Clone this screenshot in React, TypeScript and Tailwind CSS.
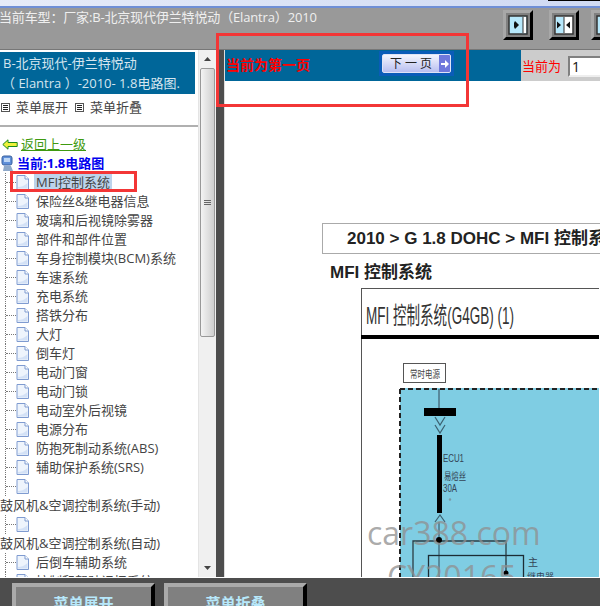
import React from 'react';

const sans = "font-['Open_Sans','Noto_Sans_CJK_SC',sans-serif]";

const treeItems = [
  { label: '保险丝&继电器信息' },
  { label: '玻璃和后视镜除雾器' },
  { label: '部件和部件位置' },
  { label: '车身控制模块(BCM)系统' },
  { label: '车速系统' },
  { label: '充电系统' },
  { label: '搭铁分布' },
  { label: '大灯' },
  { label: '倒车灯' },
  { label: '电动门窗' },
  { label: '电动门锁' },
  { label: '电动室外后视镜' },
  { label: '电源分布' },
  { label: '防抱死制动系统(ABS)' },
  { label: '辅助保护系统(SRS)' },
  { label: '' },
  { label: '鼓风机&空调控制系统(手动)', wrapped: true },
  { label: '' },
  { label: '鼓风机&空调控制系统(自动)', wrapped: true },
  { label: '后倒车辅助系统' },
  { label: '控制和驾驶记忆系统' },
];

const FileIcon = () => (
  <svg width="13" height="15" viewBox="0 0 13 15" className="shrink-0">
    <path d="M1 .5h8l3.500 3.500v10.500H1z" fill="#eef4fc" stroke="#7f9bd0" />
    <path d="M2 13.500h9.500V8C8 11 5 12 2 12z" fill="#d3e1f6" />
    <path d="M9 .5V4h3.500" fill="#fff" stroke="#7f9bd0" />
  </svg>
);

const BoxIcon = () => (
  <svg width="9" height="9" viewBox="0 0 9 9" className="shrink-0">
    <rect x=".5" y=".5" width="8" height="8" fill="#fff" stroke="#555" />
    <path d="M2 2.500h5M2 4.500h5M2 6.500h5" stroke="#222" />
  </svg>
);

const TreeRow = ({ label, wrapped }: { label: string; wrapped?: boolean }) => {
  if (wrapped) {
    return <div className="h-[19px] leading-[19px] whitespace-nowrap">{label}</div>;
  }
  return (
    <div className="h-[19px] flex items-center pl-[5px]">
      <div className="w-[11px] h-[19px] shrink-0 border-l border-dotted border-[#777]">
        <div className="h-[10px] border-b border-dotted border-[#777]" />
      </div>
      <FileIcon />
      <span className="ml-[7px] leading-[19px] whitespace-nowrap">{label}</span>
    </div>
  );
};

const ToolButton = ({ split, className }: { split?: boolean; className?: string }) => (
  <div className={`w-[30px] h-[30px] shrink-0 bg-[#808080] border-[3px] p-[2px] border-t-[#a8a8a8] border-l-[#a8a8a8] border-b-black border-r-black ${className ?? ''}`}>
    <svg width="20" height="20" viewBox="0 0 20 20" className="block">
      <rect x="1" y="1" width="18" height="18" fill={split ? '#fff' : '#b7e8fb'} stroke="#333" strokeWidth="1.500" />
      {split ? (
        <>
          <rect x="2" y="2" width="8" height="16" fill="#b7e8fb" />
          <path d="M10 2v16" stroke="#333" />
          <path d="M3 6.500l4 3.500-4 3.500zM16 6.500l-4 3.500 4 3.500z" fill="#111" />
        </>
      ) : (
        <>
          <rect x="15" y="2" width="3" height="16" fill="#fff" />
          <path d="M15 2v16" stroke="#333" />
          <path d="M7 6l4 4-4 4-1-2V8z" fill="#111" />
        </>
      )}
    </svg>
  </div>
);

const WiringDiagram = () => (
  <svg width="238" height="290" viewBox="362 288 238 290" className="block">
    <rect x="362.500" y="288.500" width="260" height="300" fill="#fff" stroke="#555" />
    <text x="367" y="324" fontSize="24" fill="#333" textLength="148" lengthAdjust="spacingAndGlyphs" fontFamily="'Liberation Sans','Noto Sans CJK SC',sans-serif">MFI 控制系统(G4GB) (1)</text>
    <rect x="362" y="335" width="238" height="4" fill="#000" />
    <rect x="404.500" y="363.500" width="42" height="19" fill="#fff" stroke="#555" />
    <text x="411" y="378" fontSize="10" fill="#444" textLength="30" lengthAdjust="spacingAndGlyphs" fontFamily="'Noto Sans CJK SC',sans-serif">常时电源</text>
    <rect x="401" y="388" width="199" height="190" fill="#7fcde3" />
    <path d="M401 389H600M401 389V578" fill="none" stroke="#222" strokeWidth="2" strokeDasharray="5 3" />
    <path d="M440 389v20" stroke="#345" strokeWidth="1" />
    <rect x="425" y="408" width="32" height="8" fill="#000" />
    <path d="M436 417l5 8 5-8M436 425l5 8 5-8" fill="none" stroke="#3c6070" strokeWidth="1.200" />
    <rect x="438" y="435" width="5" height="78" fill="#000" />
    <g fontFamily="'Liberation Sans','Noto Sans CJK SC',sans-serif" fill="#345">
      <text x="444" y="462" fontSize="11" textLength="21" lengthAdjust="spacingAndGlyphs">ECU1</text>
      <text x="445" y="480" fontSize="10" textLength="22" lengthAdjust="spacingAndGlyphs">易熔丝</text>
      <text x="444" y="492" fontSize="10" textLength="14" lengthAdjust="spacingAndGlyphs">30A</text>
      <text x="529" y="566" fontSize="10">主</text>
      <text x="528" y="580" fontSize="9">继电器</text>
    </g>
    <circle cx="451" cy="499.500" r="1.200" fill="#7a9aa8" />
    <path d="M436 522l5-7 5 7M440 522v56" fill="none" stroke="#3c6070" strokeWidth="1.200" />
    <path d="M414 578V541H507V572" fill="none" stroke="#2c3c44" strokeWidth="1.300" />
    <circle cx="440" cy="540" r="3" fill="#000" />
    <rect x="429.500" y="555.500" width="95" height="30" fill="none" stroke="#1c2c34" strokeWidth="1.300" />
    <circle cx="507" cy="573" r="2.500" fill="#000" />
  </svg>
);

export default function App() {
  return (
    <div className={`relative w-[600px] h-[606px] overflow-hidden flex flex-col bg-[#4d4d4d] ${sans} text-[13px]`}>
      {/* window title strip */}
      <div className="h-[8px] shrink-0 bg-gradient-to-r from-[#e6ebf8] to-[#cfdaf3] border-b-2 border-[#6f8fd6] flex justify-end">
        <div className="w-[52px] h-px bg-black" />
      </div>

      {/* top toolbar */}
      <div className="h-[42px] shrink-0 bg-[#999999] border-b border-[#777] flex items-start pt-[2px] relative">
        <div className="flex-1 -ml-px leading-[15px] tracking-[-0.15px] text-[#efefef] whitespace-nowrap overflow-hidden">
          当前车型：厂家:B-北京现代伊兰特悦动（Elantra）2010
        </div>
        <ToolButton className="mr-[16px]" />
        <ToolButton split className="mr-[12px]" />
        <ToolButton className="-mr-[21px]" />
      </div>

      {/* main area */}
      <div className="h-[528px] shrink-0 flex border-b border-white">
        {/* left menu */}
        <div className="w-[216px] shrink-0 bg-white flex">
          <div className="w-[198px] shrink-0 overflow-hidden text-[#444]">
            <div className="mt-[2px] w-[195px] h-[42px] bg-[#006699] text-[#d5e5ef] pl-[3px] leading-[20px] whitespace-nowrap pt-[1px]">
              <div>B-北京现代-伊兰特悦动</div>
              <div className="-ml-[1px]">（ Elantra ）-2010- 1.8电路图.</div>
            </div>
            <div className="h-[33px] flex items-center pl-[1px] border-b-2 border-[#b0b0b0] pb-[4px]">
              <BoxIcon />
              <span className="ml-[6px] mr-[7px]">菜单展开</span>
              <BoxIcon />
              <span className="ml-[6px]">菜单折叠</span>
            </div>
            <div className="pt-[8px]">
              <div className="h-[19px] flex items-center pl-[2px]">
                <svg width="16" height="11" viewBox="0 0 16 11">
                  <path d="M.8 5.500L6 .8v2.700h9.200v4H6v2.700z" fill="#eef23a" stroke="#1d8a1d" />
                </svg>
                <a className="ml-[3px] text-[#3f9a10] underline leading-[19px]">返回上一级</a>
              </div>
              <div className="h-[19px] flex items-center pl-px">
                <svg width="13" height="17" viewBox="0 0 13 17">
                  <rect x="1" y="1" width="10" height="9" rx="2" fill="#5f8fd8" stroke="#39619f" />
                  <rect x="3" y="3" width="6" height="4" fill="#bcd6f5" />
                  <path d="M3 11h7l2 5H2z" fill="#8fa9c9" />
                </svg>
                <span className="ml-[3px] font-bold text-[#0000ee] leading-[19px]">当前:1.8电路图</span>
              </div>
              <div className="h-[19px] flex items-center pl-[5px]">
                <div className="w-[11px] h-[19px] shrink-0 border-l border-dotted border-[#777]">
                  <div className="h-[10px] border-b border-dotted border-[#777]" />
                </div>
                <FileIcon />
                <span className="ml-[5px] px-[2px] bg-[#bcd4ec] leading-[17px]">MFI控制系统</span>
              </div>
              {treeItems.map((item, i) => (
                <TreeRow key={i} label={item.label} wrapped={item.wrapped} />
              ))}
            </div>
          </div>

          {/* scrollbar */}
          <div className="w-[18px] shrink-0 bg-[#f0f0f0] flex flex-col items-center border-l border-[#e4e4e4]">
            <div className="h-[18px] flex items-center justify-center">
              <svg width="7" height="4" viewBox="0 0 7 4"><path d="M3.500 0L7 4H0z" fill="#444" /></svg>
            </div>
            <div className="w-[15px] h-[269px] rounded-[2px] border border-[#999] bg-gradient-to-r from-[#f4f4f4] to-[#cfcfcf] flex items-center justify-center">
              <svg width="7" height="6" viewBox="0 0 7 6"><path d="M0 .5h7M0 2.500h7M0 4.500h7" stroke="#666" /></svg>
            </div>
            <div className="flex-1" />
            <div className="h-[18px] flex items-center justify-center">
              <svg width="7" height="4" viewBox="0 0 7 4"><path d="M0 0h7L3.500 4z" fill="#444" /></svg>
            </div>
          </div>
        </div>

        {/* gutter */}
        <div className="w-[8px] shrink-0 mt-[-1px] bg-[#4d4d4d]" />

        {/* document panel */}
        <div className="flex-1 min-w-0 relative overflow-hidden bg-white border-l border-[#ddd]">
          <div className="h-[31px] flex">
            <div className="w-[296px] shrink-0 bg-[#006699] flex items-center pl-px relative">
              <span className="text-[14px] font-bold text-[#ff0000] leading-none mt-[-2px]">当前为第一页</span>
              <div className="absolute left-[154px] top-[1px] w-[75px] h-[25px] bg-[#0a5cb8] p-[3px]">
                <div className="h-full flex rounded-[2px] border border-[#dfe3f6] bg-gradient-to-b from-[#f4f5fd] to-[#b9bff0] overflow-hidden">
                  <span className="flex-1 text-center text-[12px] leading-[17px] text-[#222] whitespace-pre">下 一 页</span>
                  <div className="w-[11px] bg-[#6f78dc] flex items-center justify-center">
                    <svg width="8" height="8" viewBox="0 0 8 8"><path d="M0 3h4V0l4 4-4 4V5H0z" fill="#fff" /></svg>
                  </div>
                </div>
              </div>
            </div>
            <div className="flex-1 bg-[#cccccc] flex items-center pl-px gap-[7px]">
              <span className="text-[#ff0000] whitespace-nowrap mt-[2px]">当前为</span>
              <div className="w-[60px] h-[21px] shrink-0 bg-white border-2 border-t-[#808080] border-l-[#808080] border-b-[#eee] border-r-[#eee] pl-[2px] leading-[17px] text-[14px] text-[#111] mt-[1px]">1</div>
            </div>
          </div>

          <div className="pt-[142px] pl-[97px]">
            <div className="w-[320px] h-[31px] border border-[#aaa] pl-[24px] flex items-center whitespace-nowrap font-bold text-[17px] text-[#222] font-['Liberation_Sans','Noto_Sans_CJK_SC',sans-serif]">
              2010 &gt; G 1.8 DOHC &gt; MFI 控制系统
            </div>
            <div className="mt-[7px] ml-[8px] h-[28px] leading-[24px] font-bold text-[17px] text-[#222] font-['Liberation_Sans','Noto_Sans_CJK_SC',sans-serif]">MFI 控制系统</div>
            <div className="ml-[39px] -mt-[1px]">
              <WiringDiagram />
            </div>
          </div>

          {/* watermark */}
          <div className="absolute left-[142px] top-[458px] text-[32px] leading-[50px] text-[#8f8f8f]/75 whitespace-nowrap">car388.com</div>
          <div className="absolute left-[162px] top-[502px] text-[32px] leading-[50px] text-[#8f8f8f]/75 whitespace-nowrap">CY20165</div>
        </div>
      </div>

      {/* bottom buttons */}
      <div className="flex-1 flex gap-[9px] pl-[12px] pt-[5px] min-h-0">
        <div className="w-[143px] h-[40px] shrink-0 bg-[#808080] border-[4px] border-t-[#aaaaaa] border-l-[#aaaaaa] border-r-black border-b-black text-center pt-[6px] text-[15px] font-bold text-[#b7e8fb] leading-[20px]">菜单展开</div>
        <div className="w-[143px] h-[40px] shrink-0 bg-[#808080] border-[4px] border-t-[#aaaaaa] border-l-[#aaaaaa] border-r-black border-b-black text-center pt-[6px] text-[15px] font-bold text-[#b7e8fb] leading-[20px]">菜单折叠</div>
      </div>

      {/* red annotations */}
      <div className="absolute left-[10px] top-[171px] w-[127px] h-[21px] border-[3px] border-[#f33636]" />
      <div className="absolute left-[216px] top-[33px] w-[253px] h-[74px] border-[3px] border-[#f33636]" />
    </div>
  );
}
